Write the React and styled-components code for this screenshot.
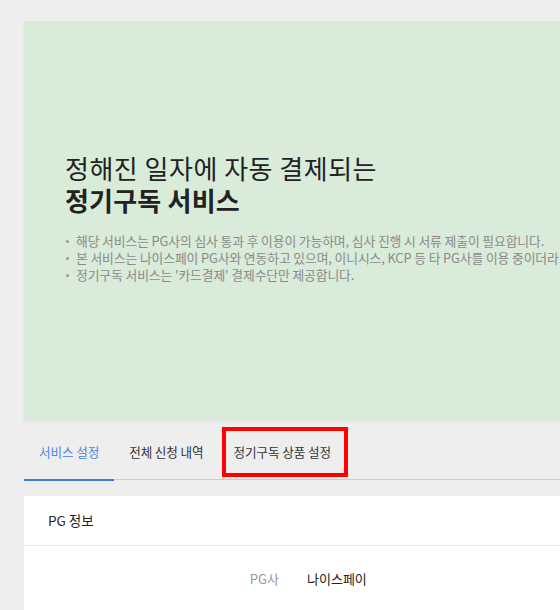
import React from "react"
import styled, { createGlobalStyle } from "styled-components"

const GlobalStyle = createGlobalStyle`
  html, body {
    margin: 0;
    padding: 0;
    background-color: #eeeeee;
    overflow: hidden;
  }
  body {
    font-family: "Noto Sans CJK KR", "Noto Sans", sans-serif;
    color: #222;
  }
`

const Page = styled.div`
  width: 1000px;
  padding: 21px 0 0 24px;
`

const Banner = styled.section`
  background-color: #d9ebd9;
  height: 399px;
  box-sizing: border-box;
  padding: 131px 0 0 41px;
  box-shadow: 0 1px 2px rgba(0, 0, 0, 0.08);
`

const Title = styled.h1`
  margin: 0;
  font-size: 26px;
  line-height: 32px;
  font-weight: 400;
  letter-spacing: 0.5px;
  color: #222;

  strong {
    display: block;
    font-weight: 700;
    letter-spacing: 0.2px;
  }
`

const Notes = styled.ul`
  list-style: none;
  margin: 16px 0 0;
  padding: 0;
  white-space: nowrap;
`

const Note = styled.li`
  position: relative;
  padding-left: 11px;
  font-size: 12.8px;
  line-height: 17px;
  color: #8a8a8a;
  letter-spacing: -0.1px;

  &::before {
    content: "";
    position: absolute;
    left: 1px;
    top: 8px;
    width: 3px;
    height: 3px;
    border-radius: 50%;
    background-color: #9a9a9a;
  }
`

const TabBar = styled.nav`
  display: flex;
  height: 60px;
  box-shadow: inset 0 -1px 0 #c9cdd3;
`

const Tab = styled.div`
  position: relative;
  box-sizing: border-box;
  padding: 23px 15px 0;
  font-size: 12.6px;
  line-height: 18px;
  letter-spacing: -0.1px;
  color: ${({ active }) => (active ? "#4a86e8" : "#333")};
  border-bottom: 2px solid ${({ active }) => (active ? "#3b7ddd" : "transparent")};
  margin-bottom: -1px;

  ${({ marked }) =>
    marked &&
    `
    &::after {
      content: "";
      position: absolute;
      top: 7px;
      bottom: 2px;
      left: 3px;
      right: -2px;
      border: 4px solid #ff0000;
    }
  `}
`

const Card = styled.section`
  margin-top: 16px;
  background-color: #fff;
  height: 200px;
`

const CardHeader = styled.div`
  padding: 0 24px;
  height: 49px;
  line-height: 49px;
  font-size: 13.5px;
  color: #222;
  border-bottom: 1px solid #ececec;
`

const InfoRow = styled.div`
  display: grid;
  grid-template-columns: 255px 1fr;
  column-gap: 28px;
  padding-top: 24px;
  font-size: 13px;
  line-height: 18px;
`

const Label = styled.span`
  text-align: right;
  color: #999;
`

const Value = styled.span`
  color: #222;
`

const App = () => {
  return (
    <>
      <GlobalStyle />
      <Page>
        <Banner>
          <Title>
            정해진 일자에 자동 결제되는
            <strong>정기구독 서비스</strong>
          </Title>
          <Notes>
            <Note>해당 서비스는 PG사의 심사 통과 후 이용이 가능하며, 심사 진행 시 서류 제출이 필요합니다.</Note>
            <Note>본 서비스는 나이스페이 PG사와 연동하고 있으며, 이니시스, KCP 등 타 PG사를 이용 중이더라도 신청이 가능합니다.</Note>
            <Note>정기구독 서비스는 '카드결제' 결제수단만 제공합니다.</Note>
          </Notes>
        </Banner>
        <TabBar>
          <Tab active>서비스 설정</Tab>
          <Tab>전체 신청 내역</Tab>
          <Tab marked>정기구독 상품 설정</Tab>
        </TabBar>
        <Card>
          <CardHeader>PG 정보</CardHeader>
          <InfoRow>
            <Label>PG사</Label>
            <Value>나이스페이</Value>
          </InfoRow>
        </Card>
      </Page>
    </>
  )
}

export default App
